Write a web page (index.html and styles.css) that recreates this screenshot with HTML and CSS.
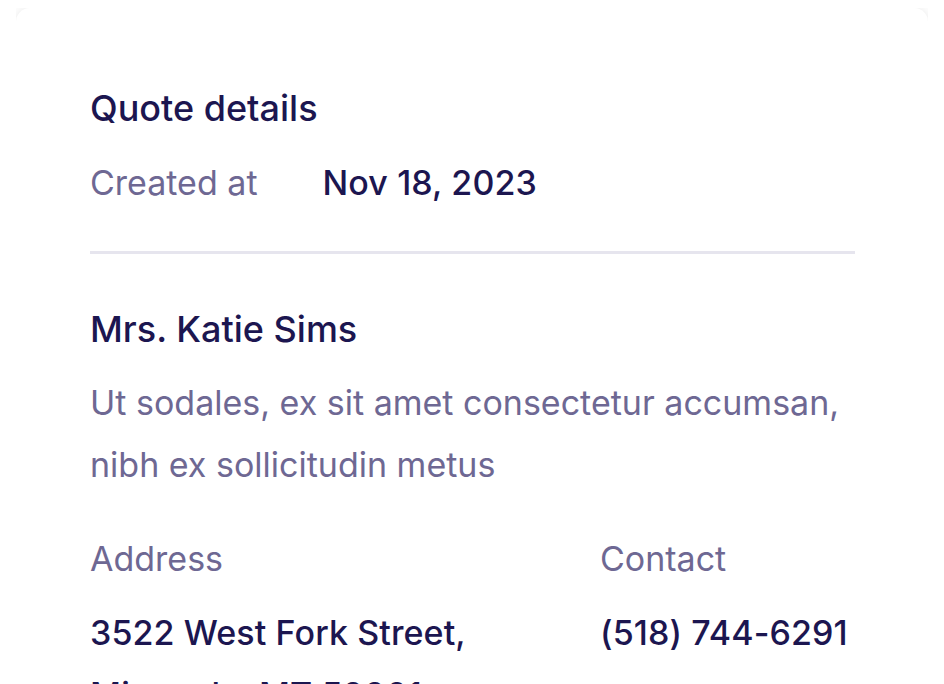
FILE: index.html
```html
<!DOCTYPE html>
<html lang="en">
<head>
<meta charset="utf-8">
<title>Quote details</title>
<link rel="stylesheet" href="styles.css">
</head>
<body>
<div class="card">
  <h2 class="title">Quote details</h2>
  <div class="meta">
    <span class="label">Created at</span>
    <span class="value">Nov 18, 2023</span>
  </div>
  <hr class="divider">
  <h3 class="name">Mrs. Katie Sims</h3>
  <p class="desc">Ut sodales, ex sit amet consectetur accumsan, nibh ex sollicitudin metus</p>
  <div class="info">
    <div class="col">
      <div class="label">Address</div>
      <div class="value block">3522 West Fork Street, Minneola, MT 59901</div>
    </div>
    <div class="col">
      <div class="label">Contact</div>
      <div class="value block">(518) 744-6291</div>
    </div>
  </div>
</div>
</body>
</html>
```

FILE: styles.css
```css
* { box-sizing: border-box; }
html, body { background: #ffffff; }
body {
  margin: 8px 16px 0 16px;
  font-family: Inter, "Noto Sans", sans-serif;
  font-size: 34px;
  line-height: 62px;
  color: #1c1650;
}
.card {
  background: #ffffff;
  border-radius: 14px;
  box-shadow: 0 1px 12px rgba(0, 0, 0, 0.11);
  padding: 69px 73px 40px 74px;
  min-height: 800px;
}
.title, .name {
  margin: 0;
  font-size: 36px;
  font-weight: 500;
  line-height: 62px;
}
.meta {
  margin-top: 13px;
  display: flex;
  gap: 65px;
}
.label { color: #6e6893; font-weight: 400; }
.value { color: #1c1650; font-weight: 500; letter-spacing: 0.1px; }
.divider {
  margin: 37px 0 44px 0;
  border: 0;
  height: 3px;
  background: #e6e5ee;
}
.desc {
  margin: 12px 0 0 0;
  color: #6e6893;
  max-width: 760px;
}
.info {
  margin-top: 32px;
  display: grid;
  grid-template-columns: 2fr 1fr;
}
.block { margin-top: 12px; max-width: 400px; }
```
